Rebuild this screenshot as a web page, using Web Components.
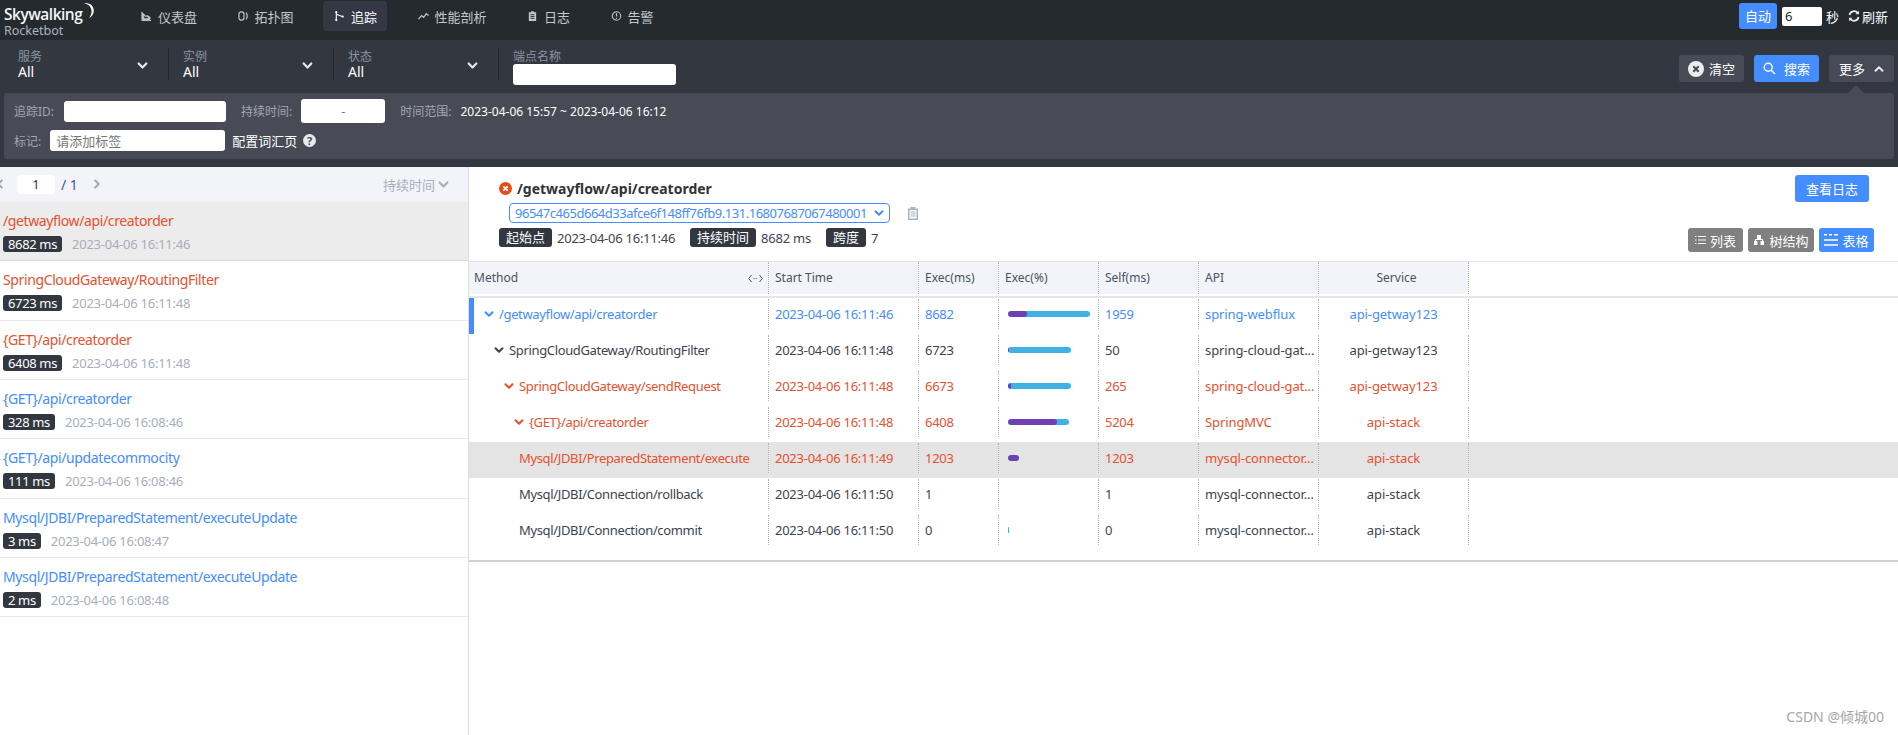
<!DOCTYPE html>
<html lang="zh">
<head>
<meta charset="utf-8">
<title>Rocketbot</title>
<style>
    html, body { margin: 0; height: 735px; overflow: hidden; background: #fff; }
    body { font-family: "Noto Sans", "Noto Sans CJK SC", sans-serif; font-size: 13px; color: #3d444f; position: relative; }
</style>
</head>
<body>
<rk-topbar>
    <rk-navitem icon="dash">仪表盘</rk-navitem>
    <rk-navitem icon="topo">拓扑图</rk-navitem>
    <rk-navitem icon="trace" active>追踪</rk-navitem>
    <rk-navitem icon="profile">性能剖析</rk-navitem>
    <rk-navitem icon="log">日志</rk-navitem>
    <rk-navitem icon="alarm">告警</rk-navitem>
</rk-topbar>
<rk-filters></rk-filters>
<trace-page>
    <trace-list slot="list">
        <trace-item state="err" selected name="/getwayflow/api/creatorder" ms="8682 ms" time="2023-04-06 16:11:46"></trace-item>
        <trace-item state="err" name="SpringCloudGateway/RoutingFilter" ms="6723 ms" time="2023-04-06 16:11:48"></trace-item>
        <trace-item state="err" name="{GET}/api/creatorder" ms="6408 ms" time="2023-04-06 16:11:48"></trace-item>
        <trace-item name="{GET}/api/creatorder" ms="328 ms" time="2023-04-06 16:08:46"></trace-item>
        <trace-item name="{GET}/api/updatecommocity" ms="111 ms" time="2023-04-06 16:08:46"></trace-item>
        <trace-item name="Mysql/JDBI/PreparedStatement/executeUpdate" ms="3 ms" time="2023-04-06 16:08:47"></trace-item>
        <trace-item name="Mysql/JDBI/PreparedStatement/executeUpdate" ms="2 ms" time="2023-04-06 16:08:48"></trace-item>
    </trace-list>
    <trace-detail slot="detail">
        <span-table>
            <span-row state="blue" marker level="1" chevron method="/getwayflow/api/creatorder" start="2023-04-06 16:11:46" exec="8682" self="1959" api="spring-webflux" service="api-getway123" total="82" part="19"></span-row>
            <span-row level="2" chevron method="SpringCloudGateway/RoutingFilter" start="2023-04-06 16:11:48" exec="6723" self="50" api="spring-cloud-gat..." service="api-getway123" total="63" part="1"></span-row>
            <span-row state="red" level="3" chevron method="SpringCloudGateway/sendRequest" start="2023-04-06 16:11:48" exec="6673" self="265" api="spring-cloud-gat..." service="api-getway123" total="63" part="3"></span-row>
            <span-row state="red" level="4" chevron method="{GET}/api/creatorder" start="2023-04-06 16:11:48" exec="6408" self="5204" api="SpringMVC" service="api-stack" total="61" part="49"></span-row>
            <span-row state="red" selected level="5" method="Mysql/JDBI/PreparedStatement/execute" start="2023-04-06 16:11:49" exec="1203" self="1203" api="mysql-connector..." service="api-stack" total="11" part="11"></span-row>
            <span-row level="5" method="Mysql/JDBI/Connection/rollback" start="2023-04-06 16:11:50" exec="1" self="1" api="mysql-connector..." service="api-stack" total="0" part="0"></span-row>
            <span-row level="5" method="Mysql/JDBI/Connection/commit" start="2023-04-06 16:11:50" exec="0" self="0" api="mysql-connector..." service="api-stack" total="1" part="0"></span-row>
        </span-table>
    </trace-detail>
</trace-page>
<rk-watermark>CSDN @倾城00</rk-watermark>

<script>
const chevron = (color, size = 10) => `<svg width="${size}" height="${size}" viewBox="0 0 10 10" fill="none" stroke="${color}" stroke-width="2" stroke-linecap="round" stroke-linejoin="round"><path d="M1.5 3.2 5 6.8 8.5 3.2"/></svg>`;

const navIcons = {
    dash: `<path d="M1 1.5v9.5h10M3 9V5l2 1.5L7 5.5l3 2V9z" fill="currentColor" stroke="currentColor"/>`,
    topo: `<rect x="1" y="1.5" width="5.5" height="9" rx="2.5" fill="none" stroke="currentColor" stroke-width="1.3"/><path d="M8.8 2.2c1.6 2 1.6 5.6 0 7.6" fill="none" stroke="currentColor" stroke-width="1.3"/>`,
    trace: `<path d="M2.5 1.5v9M2.5 4l6.5 2.5" fill="none" stroke="currentColor" stroke-width="1.2"/><circle cx="2.5" cy="1.8" r="1.2" fill="currentColor"/><circle cx="2.5" cy="10.4" r="1.2" fill="currentColor"/><circle cx="9.5" cy="6.6" r="1.2" fill="currentColor"/>`,
    profile: `<path d="M.5 9.5 4 5.5l2.2 2L9 3.5l2.5 2" fill="none" stroke="currentColor" stroke-width="1.3"/>`,
    log: `<path d="M2 1.8h2.5V.8h3v1H10V11.5H2z" fill="currentColor"/><path d="M3.8 4.6h4.4M3.8 6.6h4.4M3.8 8.6h4.4" stroke="#252a2f" stroke-width="1"/>`,
    alarm: `<circle cx="6" cy="6" r="4.6" fill="none" stroke="currentColor" stroke-width="1.2"/><path d="M6 3v3.6M6 8v1" stroke="currentColor" stroke-width="1.3"/>`
};

class RkNavitem extends HTMLElement {
    connectedCallback() {
        if (this.shadowRoot) return;
        this.attachShadow({mode: "open"});
        this.shadowRoot.innerHTML = `
        <style>
            :host { display: flex; align-items: center; gap: 6px; height: 30px; padding: 0 10px 0 11px; border-radius: 4px; color: #c2c7cc; font-size: 13px; }
            :host([active]) { background: #333844; color: #fff; }
            svg { width: 11px; height: 12px; flex: none; }
        </style>
        <svg viewBox="0 0 12 12">${navIcons[this.getAttribute("icon")]}</svg><slot></slot>`;
    }
}

const topbarTemplate = document.createElement("template");
topbarTemplate.innerHTML = `
<style>
    :host { display: flex; align-items: flex-start; height: 40px; box-sizing: border-box; background: #252a2f; color: #fff; }
    .logo { position: relative; width: 130px; flex: none; padding: 4px 0 0 4px; box-sizing: border-box; line-height: 1; }
    .logo b { display: block; font: 600 15.5px/20px "Open Sans", sans-serif; letter-spacing: -.5px; color: #f4f6f8; }
    .logo span { display: block; font: 12.5px/13px "Noto Sans", sans-serif; color: #a9b4c0; }
    .logo svg { position: absolute; left: 81px; top: 2px; }
    nav { display: flex; gap: 19.5px; margin-top: 1px; flex: 1; }
    .auto { display: flex; align-items: center; height: 26px; margin-top: 3px; padding-right: 10px; font-size: 13px; }
    .auto .on { width: 38px; height: 26px; line-height: 26px; text-align: center; background: #448dfe; border-radius: 3px; }
    .auto input { width: 40px; height: 19px; box-sizing: border-box; margin: 0 4px 0 5px; padding: 0 3px; border: 0; border-radius: 2px; font: 13px "Noto Sans", sans-serif; color: #222; }
    .auto svg { margin: 0 2px 0 9px; }
</style>
<div class="logo">
    <b>Skywalking</b><span>Rocketbot</span>
    <svg width="15" height="17" viewBox="0 0 15 17"><path d="M3 1c6-.8 10 3 9.800 8-.1 3-2 6-4.800 7 2.500-3 3.200-6.500 2-9.500C9 3.700 6.500 2 3 1z" fill="#f4f6f8"/></svg>
</div>
<nav><slot></slot></nav>
<div class="auto">
    <div class="on">自动</div>
    <input value="6">
    <span>秒</span>
    <svg width="12" height="12" viewBox="0 0 12 12" fill="none" stroke="#e8eaec" stroke-width="1.800"><path d="M1.500 5A4.600 4.600 0 0 1 9.800 3.200M10.500 7a4.600 4.600 0 0 1-8.300 1.800"/><path d="M11 .8v3.400H7.600zM1 11.200V7.800h3.400z" fill="#e8eaec" stroke="none"/></svg>
    <span>刷新</span>
</div>`;

class RkTopbar extends HTMLElement {
    constructor() {
        super();
        this.attachShadow({mode: "open"});
        this.shadowRoot.appendChild(topbarTemplate.content.cloneNode(true));
    }
}

class RkField extends HTMLElement {
    connectedCallback() {
        if (this.shadowRoot) return;
        this.attachShadow({mode: "open"});
        this.shadowRoot.innerHTML = `
        <style>
            :host { display: flex; justify-content: space-between; align-items: center; width: 151px; height: 32px; box-sizing: border-box; padding-right: 20px; border-right: 1px solid #23272c; }
            small { display: block; font-size: 12px; line-height: 13px; color: #8a94a3; margin-top: 1px; }
            div div { font-size: 14px; line-height: 17px; color: #fff; }
            svg { margin-top: 2px; }
        </style>
        <div><small>${this.getAttribute("label")}</small><div>${this.getAttribute("value")}</div></div>
        ${chevron("#e6e8ea", 11)}`;
    }
}

class RkButton extends HTMLElement {
    connectedCallback() {
        if (this.shadowRoot) return;
        this.attachShadow({mode: "open"});
        this.shadowRoot.innerHTML = `
        <style>
            :host { display: inline-flex; align-items: center; justify-content: center; gap: var(--gap, 5px); width: var(--w, 65px); height: var(--h, 27px); border-radius: 3px; background: #484b55; color: #fff; font-size: 13px; flex: none; box-sizing: border-box; }
            :host([primary]) { background: #448dfe; }
            :host([plain]) { background: #808080; }
        </style>
        <slot name="icon"></slot><slot></slot>`;
    }
}

const filtersTemplate = document.createElement("template");
filtersTemplate.innerHTML = `
<style>
    :host { display: block; height: 127px; box-sizing: border-box; background: #333840; color: #fff; position: relative; }
    .top { display: flex; height: 53px; padding: 8px 4px 0 18px; box-sizing: border-box; }
    .fields { display: flex; gap: 14px; flex: 1; }
    .endpoint { font-size: 12px; line-height: 13px; color: #8a94a3; padding-top: 2px; }
    .endpoint input { display: block; margin-top: 1px; }
    input { width: 163px; height: 21px; box-sizing: border-box; border: 0; border-radius: 3px; background: #fff; padding: 0 6px; font: 13px "Noto Sans", "Noto Sans CJK SC", sans-serif; color: #333; outline: 0; }
    input::placeholder { color: #777; }
    .btns { display: flex; gap: 10px; padding-top: 7px; }
    .panel { position: relative; margin: 0 4px; height: 66px; box-sizing: border-box; padding: 6px 10px; background: #484b55; border-radius: 3px; }
    .panel::before { content: ""; position: absolute; right: 30px; top: -8px; border: 8px solid transparent; border-top: 0; border-bottom-color: #484b55; }
    .row { display: flex; align-items: center; height: 24px; font-size: 12px; color: #a0a6b2; }
    .row + .row { margin-top: 7px; height: 21px; }
    .row .id { width: 162px; margin: 0 15px 0 10px; }
    .row .dur { width: 84px; height: 24px; margin: 0 15px 0 9px; text-align: center; padding: 0; }
    .row .tag { width: 175px; margin: 0 7px 0 9px; }
    .range { margin-left: 9px; font-size: 12px; color: #fff; }
    .vocab { color: #fff; font-size: 13px; }
    .help { display: inline-block; width: 13px; height: 13px; line-height: 13px; margin-left: 6px; border-radius: 50%; background: #e8e9ea; color: #484b55; font-size: 11px; font-weight: 700; text-align: center; }
</style>
<div class="top">
    <div class="fields">
        <rk-field label="服务" value="All"></rk-field>
        <rk-field label="实例" value="All"></rk-field>
        <rk-field label="状态" value="All"></rk-field>
        <div class="endpoint">端点名称<input></div>
    </div>
    <div class="btns">
        <rk-button>
            <svg slot="icon" width="16" height="16" viewBox="0 0 16 16"><circle cx="8" cy="8" r="8" fill="#eceded"/><path d="M5.300 5.300l5.400 5.400M10.700 5.300l-5.400 5.400" stroke="#484b55" stroke-width="2"/></svg>
            清空
        </rk-button>
        <rk-button primary style="--gap:8px">
            <svg slot="icon" width="13" height="13" viewBox="0 0 13 13" fill="none" stroke="#fff" stroke-width="1.400"><circle cx="5.200" cy="5.200" r="4"/><path d="M8.200 8.200 12 12"/></svg>
            搜索
        </rk-button>
        <rk-button style="--gap:9px">
            更多
            <svg width="10" height="10" viewBox="0 0 10 10" fill="none" stroke="#e6e8ea" stroke-width="2" stroke-linecap="round" stroke-linejoin="round"><path d="M1.500 6.800 5 3.200 8.500 6.800"/></svg>
        </rk-button>
    </div>
</div>
<div class="panel">
    <div class="row">追踪ID:<input class="id"><span>持续时间:</span><input class="dur" placeholder="-"><span>时间范围:</span><span class="range">2023-04-06 15:57 ~ 2023-04-06 16:12</span></div>
    <div class="row">标记:<input class="tag" placeholder="请添加标签"><span class="vocab">配置词汇页</span><span class="help">?</span></div>
</div>`;

class RkFilters extends HTMLElement {
    constructor() {
        super();
        this.attachShadow({mode: "open"});
        this.shadowRoot.appendChild(filtersTemplate.content.cloneNode(true));
    }
}

const pageTemplate = document.createElement("template");
pageTemplate.innerHTML = `
<style>
    :host { display: flex; height: 568px; }
    ::slotted([slot="list"]) { width: 469px; flex: none; }
    ::slotted([slot="detail"]) { flex: 1; min-width: 0; }
</style>
<slot name="list"></slot><slot name="detail"></slot>`;

class TracePage extends HTMLElement {
    constructor() {
        super();
        this.attachShadow({mode: "open"});
        this.shadowRoot.appendChild(pageTemplate.content.cloneNode(true));
    }
}

const listTemplate = document.createElement("template");
listTemplate.innerHTML = `
<style>
    :host { display: block; box-sizing: border-box; border-right: 1px solid #dcdfe3; overflow: hidden; }
    .pager { display: flex; align-items: center; height: 35px; box-sizing: border-box; padding-bottom: 1px; background: #f2f4f9; color: #3d5a80; font-size: 14px; }
    .pager input { width: 38px; height: 19px; box-sizing: border-box; margin: 0 6px 0 12px; border: 0; border-radius: 3px; text-align: center; font: 13px "Noto Sans", sans-serif; color: #5a1a4a; }
    .prev { margin-left: -5px; width: 10px; display: flex; transform: rotate(90deg); }
    .next { margin-left: 14px; display: flex; transform: rotate(-90deg); }
    .sort { margin-left: auto; margin-right: 19px; display: flex; align-items: center; gap: 3px; font-size: 13px; color: #a7aebb; }
</style>
<div class="pager">
    <span class="prev">${chevron("#a5a8ad")}</span>
    <input value="1">
    <span>/ 1</span>
    <span class="next">${chevron("#a5a8ad")}</span>
    <span class="sort">持续时间 ${chevron("#a7aebb", 11)}</span>
</div>
<slot></slot>`;

class TraceList extends HTMLElement {
    constructor() {
        super();
        this.attachShadow({mode: "open"});
        this.shadowRoot.appendChild(listTemplate.content.cloneNode(true));
    }
}

class TraceItem extends HTMLElement {
    connectedCallback() {
        if (this.shadowRoot) return;
        this.attachShadow({mode: "open"});
        this.shadowRoot.innerHTML = `
        <style>
            :host { display: block; height: 59.33px; box-sizing: border-box; padding: 8px 0 0 3px; border-bottom: 1px solid #e8e8e8; color: #448dfe; font-size: 13px; }
            :host([state="err"]) { color: #e8502e; }
            :host([selected]) { background: #ececec; border-bottom-color: #dcdcdc; }
            .name { font-size: 14px; letter-spacing: -.38px; line-height: 21px; white-space: nowrap; }
            .meta { display: flex; align-items: center; margin-top: 4px; }
            .ms { height: 16px; line-height: 16px; padding: 0 5px; background: #333840; border-radius: 3px; color: #fff; letter-spacing: -.35px; }
            .time { margin-left: 10px; color: #a7aebb; letter-spacing: -.25px; }
        </style>
        <div class="name">${this.getAttribute("name")}</div>
        <div class="meta"><span class="ms">${this.getAttribute("ms")}</span><span class="time">${this.getAttribute("time")}</span></div>`;
    }
}

const detailTemplate = document.createElement("template");
detailTemplate.innerHTML = `
<style>
    :host { display: block; }
    .head { display: flex; justify-content: space-between; height: 94px; box-sizing: border-box; padding: 0 24px 0 30px; }
    .title { display: flex; align-items: center; gap: 5px; height: 20px; margin-top: 11px; font-size: 14px; font-weight: 700; color: #333; }
    .pick { display: flex; align-items: center; gap: 17px; margin: 5px 0 0 10px; }
    .select { display: flex; align-items: center; justify-content: space-between; width: 381px; height: 20px; box-sizing: border-box; padding: 0 5px; border: 1px solid #448dfe; border-radius: 4px; color: #448dfe; font-size: 13px; letter-spacing: -.48px; white-space: nowrap; }
    .meta { display: flex; align-items: center; height: 19px; margin-top: 5px; font-size: 13px; color: #3d444f; }
    .tag { height: 19px; line-height: 19px; padding: 0 7px; border-radius: 3px; background: #333840; color: #fff; }
    .val { margin: 0 15px 0 5px; letter-spacing: -.25px; }
    .side { display: flex; flex-direction: column; align-items: flex-end; }
    .logs { margin: 8px 5px 0 0; }
    .views { display: flex; gap: 5px; margin-top: 26px; }
</style>
<div class="head">
    <div>
        <div class="title">
            <svg width="13" height="13" viewBox="0 0 13 13"><circle cx="6.500" cy="6.500" r="6.500" fill="#e54c17"/><path d="M4.300 4.300l4.400 4.400M8.700 4.300 4.300 8.700" stroke="#fff" stroke-width="1.800"/></svg>
            /getwayflow/api/creatorder
        </div>
        <div class="pick">
            <div class="select"><span>96547c465d664d33afce6f148ff76fb9.131.16807687067480001</span>${chevron("#448dfe", 10)}</div>
            <svg width="12" height="15" viewBox="0 0 12 15"><path d="M1 2.500h2.500V1h5v1.500H11a1 1 0 0 1 0 0V14H1z" fill="#a8b2c0"/><path d="M2.500 4h7v8.500h-7z" fill="#fff"/><path d="M3.500 6h5M3.500 8h5M3.500 10h5" stroke="#a8b2c0"/></svg>
        </div>
        <div class="meta">
            <span class="tag">起始点</span><span class="val">2023-04-06 16:11:46</span>
            <span class="tag">持续时间</span><span class="val">8682 ms</span>
            <span class="tag">跨度</span><span class="val">7</span>
        </div>
    </div>
    <div class="side">
        <rk-button class="logs" primary style="--w:74px">查看日志</rk-button>
        <div class="views">
            <rk-button plain style="--w:55px;--h:24px;--gap:4px">
                <svg slot="icon" width="11" height="10" viewBox="0 0 11 10" stroke="#fff"><path d="M3 1.500h8M3 5h8M3 8.500h8M0 1.500h1.500M0 5h1.500M0 8.500h1.500"/></svg>
                列表
            </rk-button>
            <rk-button plain style="--w:66px;--h:24px;--gap:4px">
                <svg slot="icon" width="12" height="10" viewBox="0 0 12 10" fill="#fff"><path d="M4 0h4v4H4zM1 6h3.500v4H1zM7.500 6H11v4H7.500z"/><path d="M2.500 6V4.500h7V6" fill="none" stroke="#fff"/></svg>
                树结构
            </rk-button>
            <rk-button primary style="--w:55px;--h:24px;--gap:4px">
                <svg slot="icon" width="14" height="12" viewBox="0 0 14 12" stroke="#fff" stroke-width="1.500"><path d="M0 .8h3M5 .8h3M10 .8h4M0 6h14M0 11h14"/></svg>
                表格
            </rk-button>
        </div>
    </div>
</div>
<slot></slot>`;

class TraceDetail extends HTMLElement {
    constructor() {
        super();
        this.attachShadow({mode: "open"});
        this.shadowRoot.appendChild(detailTemplate.content.cloneNode(true));
    }
}

const tableTemplate = document.createElement("template");
tableTemplate.innerHTML = `
<style>
    :host { display: block; --cols: 299px 150px 80px 100px 100px 120px 150px 1fr; border-bottom: 2px solid #d0d0d0; padding-bottom: 10px; }
    .head { display: grid; grid-template-columns: var(--cols); height: 37px; box-sizing: border-box; border-top: 1px solid #e4e6ea; border-bottom: 2px solid #e4e6ea; padding-bottom: 2px; font-size: 12px; color: #4a5362; background: linear-gradient(#f2f4f9, #f2f4f9) no-repeat 0 0 / 999px 32px; }
    .head div { height: 32px; line-height: 32px; padding-left: 6px; border-right: 0; border-left: 1px dotted #b4b4b4; white-space: nowrap; display: flex; justify-content: space-between; box-sizing: border-box; }
    .head div:first-child { border-left: 0; padding-left: 5px; padding-right: 5px; align-items: center; }
    .head .c { justify-content: center; }
    .head .end { padding: 0; }
    .head div:first-child svg { display: block; }
</style>
<div class="head">
    <div>Method<svg width="15" height="9" viewBox="0 0 15 9" fill="none" stroke="#4a5362"><path d="M3.500 1 .8 4.500 3.500 8M11.500 1l2.700 3.500L11.500 8"/><path d="M5.500 4.500h4" stroke-dasharray="1 1.200"/></svg></div>
    <div>Start Time</div><div>Exec(ms)</div><div>Exec(%)</div><div>Self(ms)</div><div>API</div><div class="c">Service</div><div class="end"></div>
</div>
<slot></slot>`;

class SpanTable extends HTMLElement {
    constructor() {
        super();
        this.attachShadow({mode: "open"});
        this.shadowRoot.appendChild(tableTemplate.content.cloneNode(true));
    }
}

class SpanRow extends HTMLElement {
    connectedCallback() {
        if (this.shadowRoot) return;
        const a = n => this.getAttribute(n);
        const level = +a("level");
        const total = +a("total"), part = +a("part");
        const color = a("state") == "blue" ? "#448dfe" : a("state") == "red" ? "#e8502e" : "#3d444f";
        this.attachShadow({mode: "open"});
        this.shadowRoot.innerHTML = `
        <style>
            :host { display: grid; grid-template-columns: var(--cols); height: 36px; font-size: 13px; color: ${color}; position: relative; }
            :host([selected]) { background: #e4e4e4; }
            :host([marker])::before { content: ""; position: absolute; left: 0; top: 0; width: 5px; height: 36px; background: #448dfe; }
            .cell { height: 30px; margin-top: 1px; line-height: 30px; padding-left: 6px; border-left: 1px dotted #b4b4b4; white-space: nowrap; box-sizing: border-box; }
            .num { letter-spacing: -.25px; }
            .method { display: flex; align-items: center; border-left: 0; padding-left: ${level * 10}px; letter-spacing: -.35px; }
            .arrow { display: flex; justify-content: center; width: 20px; flex: none; }
            .api { letter-spacing: -.1px; }
            .service { text-align: center; padding-left: 0; letter-spacing: -.1px; }
            .track { position: relative; height: 6px; margin: 12px 0 0 3px; width: ${total}px; background: #3fb1e3; border-radius: 3px; overflow: hidden; }
            .track i { display: block; height: 6px; width: ${part}px; background: #6f40b0; border-radius: 3px; }
        </style>
        <div class="cell method">${a("chevron") !== null ? `<span class="arrow">${chevron(color, 10)}</span>` : ""}<span>${a("method")}</span></div>
        <div class="cell num">${a("start")}</div>
        <div class="cell num">${a("exec")}</div>
        <div class="cell"><div class="track"><i></i></div></div>
        <div class="cell num">${a("self")}</div>
        <div class="cell api">${a("api")}</div>
        <div class="cell service">${a("service")}</div>
        <div class="cell"></div>`;
    }
}

class RkWatermark extends HTMLElement {
    constructor() {
        super();
        this.attachShadow({mode: "open"});
        this.shadowRoot.innerHTML = `
        <style>
            :host { position: absolute; right: 14px; bottom: 11px; font-size: 14px; line-height: 14px; color: #a6a6a6; }
        </style>
        <slot></slot>`;
    }
}

customElements.define("rk-navitem", RkNavitem);
customElements.define("rk-topbar", RkTopbar);
customElements.define("rk-field", RkField);
customElements.define("rk-button", RkButton);
customElements.define("rk-filters", RkFilters);
customElements.define("trace-page", TracePage);
customElements.define("trace-list", TraceList);
customElements.define("trace-item", TraceItem);
customElements.define("trace-detail", TraceDetail);
customElements.define("span-table", SpanTable);
customElements.define("span-row", SpanRow);
customElements.define("rk-watermark", RkWatermark);
</script>
</body>
</html>
